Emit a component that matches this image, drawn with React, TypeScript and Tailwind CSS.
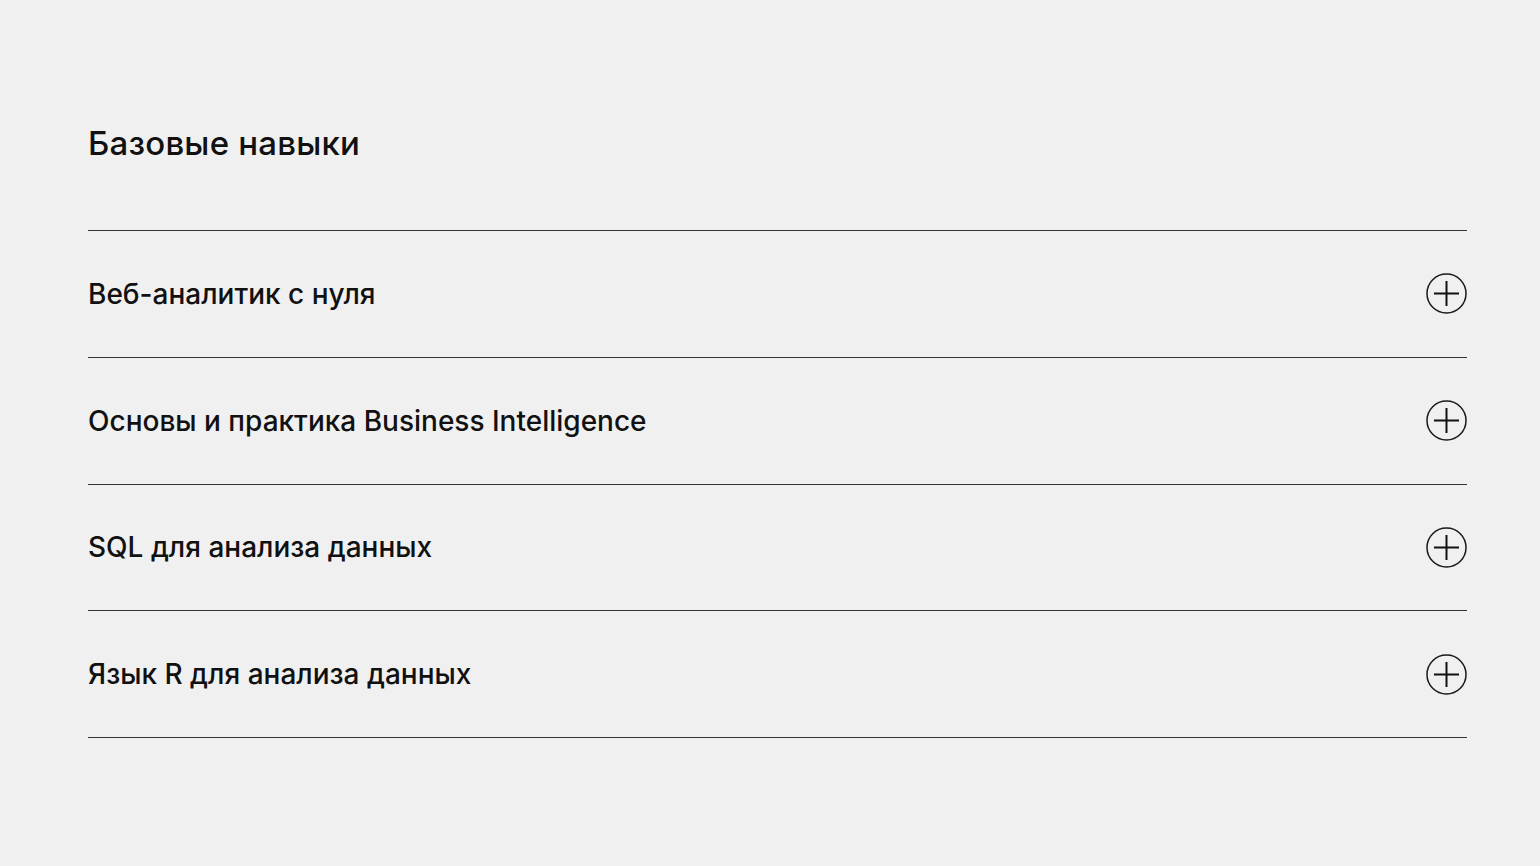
const items = [
  'Веб-аналитик с нуля',
  'Основы и практика Business Intelligence',
  'SQL для анализа данных',
  'Язык R для анализа данных',
];

function PlusCircle() {
  return (
    <svg width="41" height="41" viewBox="0 0 41 41" fill="none" className="shrink-0">
      <circle cx="20.5" cy="20.5" r="19.5" stroke="#1a1a1a" strokeWidth="1.5" />
      <path d="M20.5 8v25M8 20.5h25" stroke="#111111" strokeWidth="2" />
    </svg>
  );
}

export default function App() {
  return (
    <div className="min-h-[866px] w-full bg-[#f0f0f0] text-[#111111]" style={{ fontFamily: 'Inter, "Noto Sans", sans-serif' }}>
      <div className="pl-[88px] pr-[73px] pt-[122px]">
        <h2 className="text-[33px] leading-[42px] font-medium tracking-[0.2px]">Базовые навыки</h2>
        <div className="mt-[66px] border-t border-[#333333]">
          {items.map((item) => (
            <div key={item} className="flex h-[126.75px] items-center justify-between border-b border-[#333333]">
              <span className="text-[28px] leading-[34px] font-medium tracking-[0px]">{item}</span>
              <PlusCircle />
            </div>
          ))}
        </div>
      </div>
    </div>
  );
}
